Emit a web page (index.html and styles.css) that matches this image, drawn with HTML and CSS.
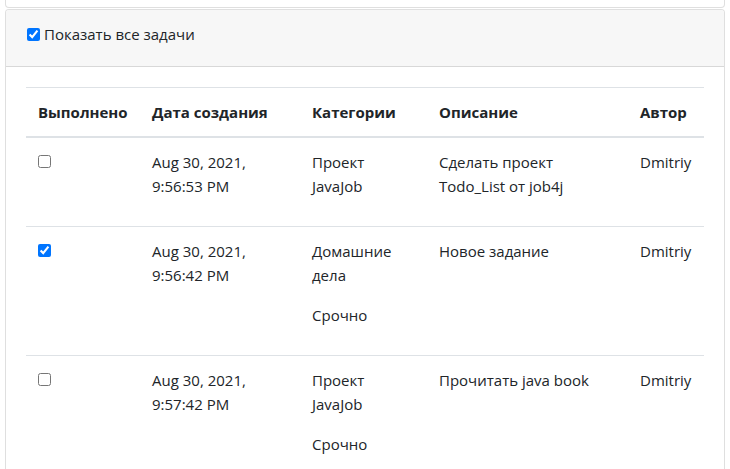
FILE: index.html
```html
<!DOCTYPE html>
<html lang="ru">
<head>
<meta charset="utf-8">
<title>Задачи</title>
<link rel="stylesheet" href="styles.css">
</head>
<body>
<div class="page">
  <div class="card card-prev"></div>
  <div class="card">
    <div class="card-header">
      <label class="show-all"><input type="checkbox" class="chk chk-head" checked>Показать все задачи</label>
    </div>
    <div class="card-body">
      <table class="table">
        <thead>
          <tr>
            <th class="c-done">Выполнено</th>
            <th class="c-date">Дата создания</th>
            <th class="c-cat">Категории</th>
            <th class="c-desc">Описание</th>
            <th class="c-author">Автор</th>
          </tr>
        </thead>
        <tbody>
          <tr>
            <td><input type="checkbox" class="chk"></td>
            <td>Aug 30, 2021, 9:56:53 PM</td>
            <td><p>Проект JavaJob</p></td>
            <td>Сделать проект Todo_List от job4j</td>
            <td>Dmitriy</td>
          </tr>
          <tr>
            <td><input type="checkbox" class="chk" checked></td>
            <td>Aug 30, 2021, 9:56:42 PM</td>
            <td><p>Домашние дела</p><p>Срочно</p></td>
            <td>Новое задание</td>
            <td>Dmitriy</td>
          </tr>
          <tr>
            <td><input type="checkbox" class="chk"></td>
            <td>Aug 30, 2021, 9:57:42 PM</td>
            <td><p>Проект JavaJob</p><p>Срочно</p></td>
            <td>Прочитать java book</td>
            <td>Dmitriy</td>
          </tr>
        </tbody>
      </table>
    </div>
  </div>
</div>
</body>
</html>
```

FILE: styles.css
```css
* { box-sizing: border-box; }
html, body { margin: 0; padding: 0; background: #fff; }
body {
  font-family: "Open Sans", "Noto Sans", sans-serif;
  font-size: 15px;
  line-height: 24px;
  color: #212529;
}
.page { padding: 0 5px; }
.card {
  border: 1px solid rgba(0,0,0,.125);
  border-radius: 4px;
  background: #fff;
}
.card-prev {
  height: 8px;
  border-top: none;
  border-radius: 0 0 4px 4px;
  margin-bottom: 1px;
}
.card-header {
  background: #f7f7f7;
  border-bottom: 1px solid rgba(0,0,0,.125);
  padding: 12px 20px 19px 21px;
  border-radius: 3px 3px 0 0;
}
.show-all { display: inline-flex; align-items: center; }
.chk { margin: 0; width: 13px; height: 13px; }
.chk-head { margin-right: 4px; }
.card-body { padding: 20px 20px 0; }
.table { width: 100%; border-collapse: collapse; table-layout: fixed; }
.table th, .table td {
  padding: 12px;
  text-align: left;
  vertical-align: top;
  border-top: 1px solid #dee2e6;
}
.table th { font-weight: 700; border-bottom: 2px solid #dee2e6; }
.table p { margin: 0 0 16px; }
.c-done { width: 114px; }
.c-date { width: 160px; }
.c-cat { width: 127px; }
.c-desc { width: 201px; }
.c-author { width: 76px; }
```
